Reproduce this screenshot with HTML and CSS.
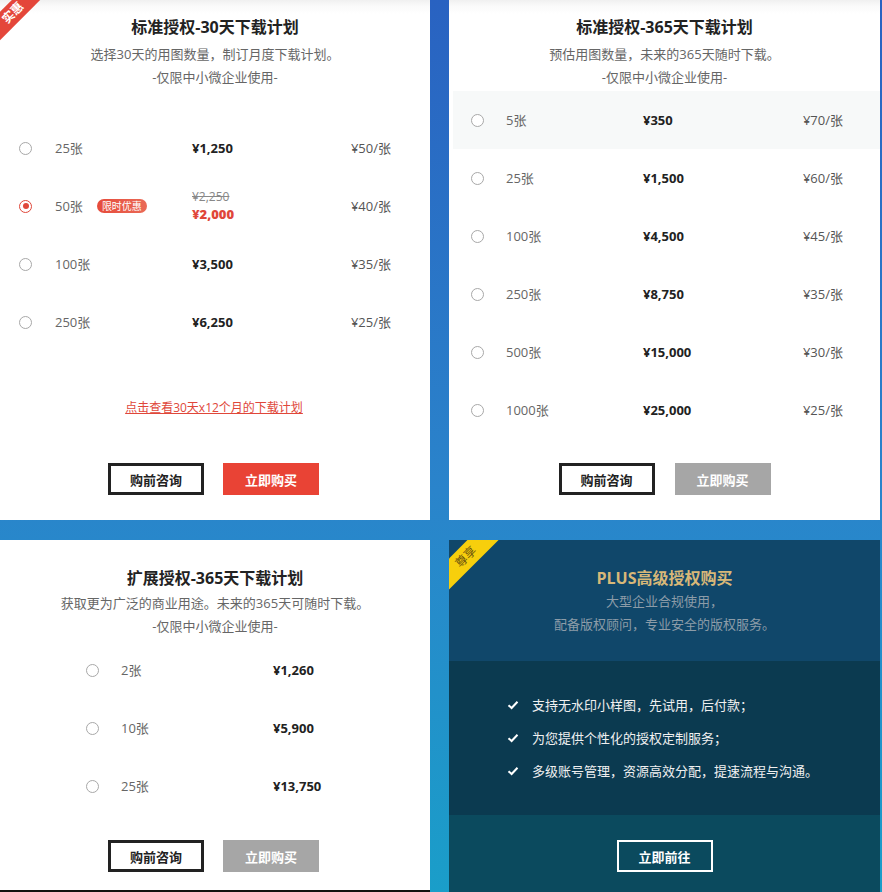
FILE: index.html
```html
<!DOCTYPE html>
<html lang="zh-CN">
<head>
<meta charset="utf-8">
<title>授权购买</title>
<link rel="stylesheet" href="styles.css">
</head>
<body>
<div class="page">
  <section class="panel p-tl">
    <div class="corner corner-red"><span>实惠</span></div>
    <header class="head">
      <h2 class="title">标准授权-30天下载计划</h2>
      <p class="sub">选择30天的用图数量，制订月度下载计划。</p>
      <p class="sub">-仅限中小微企业使用-</p>
    </header>
    <ul class="rows rows-tl">
      <li class="row"><i class="radio"></i><span class="qty">25张</span><span class="price">¥1,250</span><span class="unit">¥50/张</span></li>
      <li class="row"><i class="radio on"></i><span class="qty">50张<em class="tag">限时优惠</em></span><span class="price"><s class="old">¥2,250</s><b class="new">¥2,000</b></span><span class="unit">¥40/张</span></li>
      <li class="row"><i class="radio"></i><span class="qty">100张</span><span class="price">¥3,500</span><span class="unit">¥35/张</span></li>
      <li class="row"><i class="radio"></i><span class="qty">250张</span><span class="price">¥6,250</span><span class="unit">¥25/张</span></li>
    </ul>
    <a class="plan-link" href="#">点击查看30天x12个月的下载计划</a>
    <div class="btns btns-tl">
      <a class="btn btn-line" href="#">购前咨询</a>
      <a class="btn btn-red" href="#">立即购买</a>
    </div>
  </section>

  <section class="panel p-tr">
    <header class="head">
      <h2 class="title">标准授权-365天下载计划</h2>
      <p class="sub">预估用图数量，未来的365天随时下载。</p>
      <p class="sub">-仅限中小微企业使用-</p>
    </header>
    <ul class="rows rows-tr">
      <li class="row hl"><i class="radio"></i><span class="qty">5张</span><span class="price">¥350</span><span class="unit">¥70/张</span></li>
      <li class="row"><i class="radio"></i><span class="qty">25张</span><span class="price">¥1,500</span><span class="unit">¥60/张</span></li>
      <li class="row"><i class="radio"></i><span class="qty">100张</span><span class="price">¥4,500</span><span class="unit">¥45/张</span></li>
      <li class="row"><i class="radio"></i><span class="qty">250张</span><span class="price">¥8,750</span><span class="unit">¥35/张</span></li>
      <li class="row"><i class="radio"></i><span class="qty">500张</span><span class="price">¥15,000</span><span class="unit">¥30/张</span></li>
      <li class="row"><i class="radio"></i><span class="qty">1000张</span><span class="price">¥25,000</span><span class="unit">¥25/张</span></li>
    </ul>
    <div class="btns btns-tr">
      <a class="btn btn-line" href="#">购前咨询</a>
      <a class="btn btn-gray" href="#">立即购买</a>
    </div>
  </section>

  <section class="panel p-bl">
    <header class="head head-b">
      <h2 class="title">扩展授权-365天下载计划</h2>
      <p class="sub">获取更为广泛的商业用途。未来的365天可随时下载。</p>
      <p class="sub">-仅限中小微企业使用-</p>
    </header>
    <ul class="rows rows-bl">
      <li class="row"><i class="radio"></i><span class="qty">2张</span><span class="price">¥1,260</span></li>
      <li class="row"><i class="radio"></i><span class="qty">10张</span><span class="price">¥5,900</span></li>
      <li class="row"><i class="radio"></i><span class="qty">25张</span><span class="price">¥13,750</span></li>
    </ul>
    <div class="btns btns-bl">
      <a class="btn btn-line" href="#">购前咨询</a>
      <a class="btn btn-gray" href="#">立即购买</a>
    </div>
  </section>

  <section class="panel p-br">
    <div class="corner corner-gold"><span>尊享</span></div>
    <header class="plus-head">
      <h2 class="plus-title">PLUS高级授权购买</h2>
      <p class="plus-sub">大型企业合规使用，</p>
      <p class="plus-sub">配备版权顾问，专业安全的版权服务。</p>
    </header>
    <ul class="plus-list">
      <li><svg class="chk" viewBox="0 0 12 10" width="12" height="10"><polyline points="1.5,5.2 4.6,8 10.5,1.8" fill="none" stroke="#fff" stroke-width="2"/></svg>支持无水印小样图，先试用，后付款；</li>
      <li><svg class="chk" viewBox="0 0 12 10" width="12" height="10"><polyline points="1.5,5.2 4.6,8 10.5,1.8" fill="none" stroke="#fff" stroke-width="2"/></svg>为您提供个性化的授权定制服务；</li>
      <li><svg class="chk" viewBox="0 0 12 10" width="12" height="10"><polyline points="1.5,5.2 4.6,8 10.5,1.8" fill="none" stroke="#fff" stroke-width="2"/></svg>多级账号管理，资源高效分配，提速流程与沟通。</li>
    </ul>
    <div class="plus-foot">
      <a class="btn btn-white" href="#">立即前往</a>
    </div>
  </section>
</div>
</body>
</html>
```

FILE: styles.css
```css
* { box-sizing: border-box; }
html, body { margin: 0; padding: 0; }
body {
  width: 882px;
  height: 892px;
  overflow: hidden;
  font-family: "Open Sans", "Noto Sans CJK SC", sans-serif;
  background: linear-gradient(180deg, #2962c1 0%, #2a84cb 55%, #1a9ec9 100%);
}
ul { list-style: none; margin: 0; padding: 0; }
p, h2 { margin: 0; }
a { text-decoration: none; }

.page {
  display: grid;
  grid-template-columns: 430px 431px;
  grid-template-rows: 520px 352px;
  column-gap: 19px;
  row-gap: 20px;
}

.panel {
  position: relative;
  background: #fff;
  display: flex;
  flex-direction: column;
  overflow: hidden;
}
.p-tl, .p-tr {
  background: linear-gradient(180deg, #f0f0f0 0, #fafafa 6px, #fff 14px);
}
.p-bl { border-bottom: 2px solid #111; }

.head { padding-top: 15px; text-align: center; }
.head-b { padding-top: 26px; }
.title {
  font-size: 16px;
  line-height: 24px;
  font-weight: 700;
  color: #222;
}
.head .sub:first-of-type { margin-top: 4px; }
.head-b .sub:first-of-type { margin-top: 2px; }
.sub {
  font-size: 13px;
  line-height: 23px;
  color: #666;
}

.rows { display: flex; flex-direction: column; }
.row {
  display: grid;
  align-items: center;
  height: 58px;
  font-size: 13px;
  line-height: 18px;
}
.rows-tl { margin-top: 30px; }
.rows-tl .row {
  grid-template-columns: 36px 137px 1fr auto;
  padding: 0 39px 0 19px;
}
.rows-tr { margin-top: 2px; margin-left: 4px; }
.rows-tr .row {
  grid-template-columns: 35px 137px 1fr auto;
  padding: 0 37px 0 18px;
}
.row.hl { background: #f7f9f9; }
.rows-bl { margin-top: 3px; }
.rows-bl .row {
  grid-template-columns: 35px 152px 1fr;
  padding: 0 0 0 86px;
}

.radio {
  display: block;
  width: 13px;
  height: 13px;
  border: 1px solid #a8a8a8;
  border-radius: 50%;
  background: #fff;
  position: relative;
}
.radio.on { border-color: #e0473a; }
.radio.on::after {
  content: "";
  position: absolute;
  left: 2.5px; top: 2.5px;
  width: 6px; height: 6px;
  border-radius: 50%;
  background: #e0473a;
}
.qty { color: #666; display: flex; align-items: center; height: 18px; }
.tag {
  font-style: normal;
  margin-left: 14px;
  display: inline-block;
  height: 14px;
  line-height: 14px;
  padding: 0 5px;
  border-radius: 7px;
  font-size: 10px;
  color: #fff;
  background: linear-gradient(90deg, #e64b3b, #ea6a56);
}
.price { font-weight: 700; color: #222; display: flex; flex-direction: column; }
.old { font-weight: 400; color: #888; font-size: 12px; line-height: 16px; }
.new { color: #e0473a; font-size: 13px; line-height: 18px; }
.unit { color: #555; text-align: right; }

.plan-link {
  align-self: center;
  margin-top: 47px;
  margin-right: 2px;
  font-size: 12px;
  line-height: 20px;
  color: #e0473a;
  text-decoration: underline;
}

.btns { display: flex; justify-content: center; gap: 19px; }
.btns-tl { margin-top: 45px; padding-right: 3px; }
.btns-tr { margin-top: 24px; gap: 20px; }
.btns-bl { margin-top: 25px; padding-right: 3px; }
.btn {
  width: 96px;
  height: 32px;
  display: flex;
  align-items: center;
  justify-content: center;
  font-size: 13px;
  font-weight: 700;
}
.btn-line { border: 3px solid #222; color: #222; background: #fff; }
.btn-red { background: #e94335; color: #fff; }
.btn-gray { background: #a6a6a6; color: #fff; }
.btn-white { border: 2px solid #fff; color: #fff; }

.corner {
  position: absolute;
  top: 0; left: 0;
  width: 60px; height: 60px;
  overflow: hidden;
  z-index: 2;
}
.corner span {
  position: absolute;
  width: 80px;
  text-align: center;
  transform: rotate(-45deg);
  font-weight: 700;
  font-size: 12px;
}
.corner-red span {
  left: -27px; top: 3px;
  height: 20px; line-height: 20px;
  background: #e4463a;
  color: #fff;
}
.corner-gold span {
  left: -22.75px; top: 6.25px;
  height: 22px; line-height: 22px;
  background: #f7cf0c;
  color: #6a5210;
  font-weight: 400;
}

.p-br { background: #0b4a5e; color: #fff; }
.plus-head {
  height: 121px;
  background: #10476a;
  text-align: center;
  padding-top: 26px;
}
.plus-title {
  font-size: 16px;
  line-height: 24px;
  font-weight: 700;
  color: #d8b878;
}
.plus-sub {
  font-size: 13px;
  line-height: 23px;
  color: #8c9ca8;
}
.plus-list {
  height: 154px;
  background: #0b3a50;
  padding: 27px 0 0 58px;
}
.plus-list li {
  display: flex;
  align-items: center;
  height: 33px;
  font-size: 13px;
  color: #f0f0f0;
}
.chk { margin-right: 13px; flex: none; }
.plus-foot {
  flex: 1;
  display: flex;
  justify-content: center;
  padding-top: 25px;
}
```
